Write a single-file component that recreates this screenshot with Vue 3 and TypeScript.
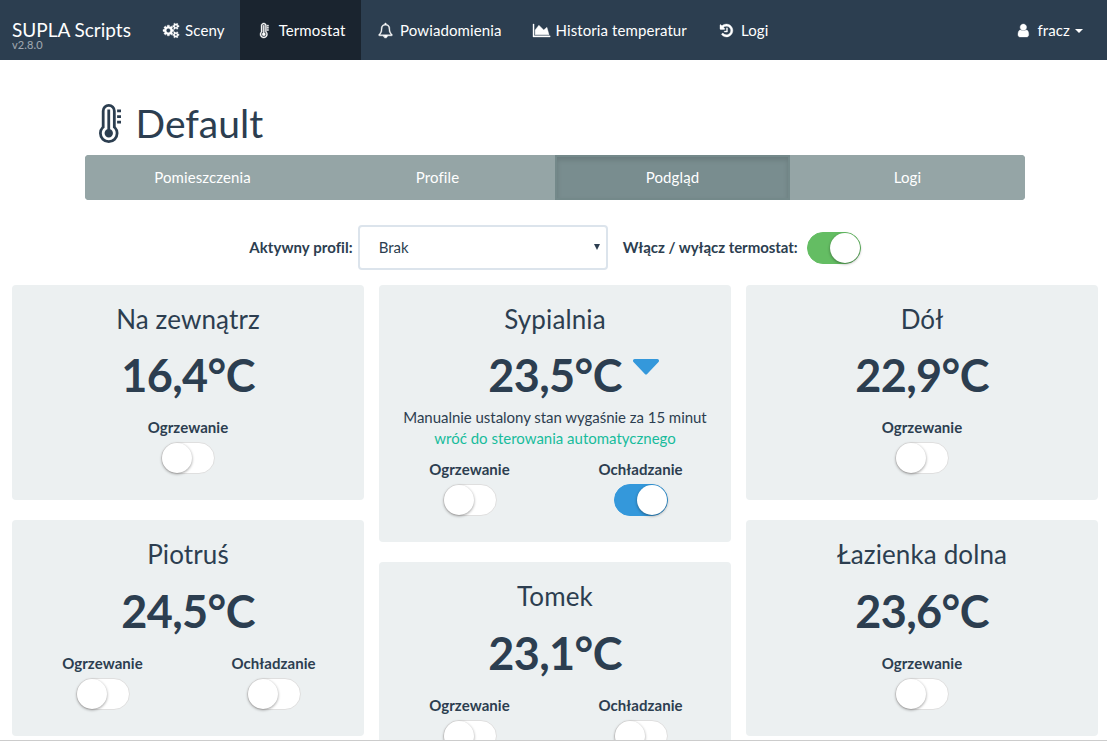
<script setup lang="ts">
interface Glyph {
  box: string
  width: number
  path: string
}

interface Switch {
  label: string
  on: boolean
}

interface Room {
  name: string
  temperature: string
  cooling?: boolean
  manual?: boolean
  switches: Switch[]
}

const thermometer: Glyph = {
  box: '0 0 1024 1792',
  width: 1024,
  path: 'M640 1344q0 80-56 136t-136 56-136-56-56-136q0-60 35-110t93-71v-907h128v907q58 21 93 71t35 110zm128 0q0-77-34-144t-94-112v-768q0-80-56-136t-136-56-136 56-56 136v768q-60 45-94 112t-34 144q0 133 93.5 226.5t226.5 93.5 226.5-93.5 93.5-226.5zm128 0q0 185-131.5 316.5t-316.5 131.5-316.5-131.5-131.5-316.5q0-182 128-313v-711q0-133 93.5-226.5t226.5-93.5 226.5 93.5 93.5 226.5v711q128 131 128 313zm128-576v128h-192v-128h192zm0-256v128h-192v-128h192zm0-256v128h-192v-128h192z',
}
const cogs: Glyph = {
  box: '-64 0 1920 1792',
  width: 1920,
  path: 'M832 896q0-106-75-181t-181-75-181 75-75 181 75 181 181 75 181-75 75-181zm768 512q0-52-38-90t-90-38-90 38-38 90q0 53 37.5 90.5t90.5 37.5 90.5-37.5 37.5-90.5zm0-1024q0-52-38-90t-90-38-90 38-38 90q0 53 37.5 90.5t90.5 37.5 90.5-37.5 37.5-90.5zm-384 421v185q0 10-7 19.5t-16 10.5l-155 24q-11 35-32 76 34 48 90 115 7 11 7 20 0 12-7 19-23 30-82.5 89.5t-78.5 59.5q-11 0-21-7l-115-90q-37 19-77 31-11 108-23 155-7 24-30 24h-186q-11 0-20-7.5t-10-17.5l-23-153q-34-10-75-31l-118 89q-7 7-20 7-11 0-21-8-144-133-144-160 0-9 7-19 10-14 41-53t47-61q-23-44-35-82l-152-24q-10-1-17-9.5t-7-19.5v-185q0-10 7-19.5t16-10.5l155-24q11-35 32-76-34-48-90-115-7-11-7-20 0-12 7-20 22-30 82-89t79-59q11 0 21 7l115 90q34-18 77-32 11-108 23-154 7-24 30-24h186q11 0 20 7.5t10 17.5l23 153q34 10 75 31l118-89q8-7 20-7 11 0 21 8 144 133 144 160 0 8-7 19-12 16-42 54t-45 60q23 48 34 82l152 23q10 2 17 10.5t7 19.5zm640 533v140q0 16-149 31-12 27-30 52 51 113 51 138 0 4-4 7-122 71-124 71-8 0-46-47t-52-68q-20 2-30 2t-30-2q-14 21-52 68t-46 47q-2 0-124-71-4-3-4-7 0-25 51-138-18-25-30-52-149-15-149-31v-140q0-16 149-31 13-29 30-52-51-113-51-138 0-4 4-7 4-2 35-20t59-34 30-16q8 0 46 46.5t52 67.5q20-2 30-2t30 2q51-71 92-112l6-2q4 0 124 70 4 3 4 7 0 25-51 138 17 23 30 52 149 15 149 31zm0-1024v140q0 16-149 31-12 27-30 52 51 113 51 138 0 4-4 7-122 71-124 71-8 0-46-47t-52-68q-20 2-30 2t-30-2q-14 21-52 68t-46 47q-2 0-124-71-4-3-4-7 0-25 51-138-18-25-30-52-149-15-149-31v-140q0-16 149-31 13-29 30-52-51-113-51-138 0-4 4-7 4-2 35-20t59-34 30-16q8 0 46 46.5t52 67.5q20-2 30-2t30 2q51-71 92-112l6-2q4 0 124 70 4 3 4 7 0 25-51 138 17 23 30 52 149 15 149 31z',
}
const bell: Glyph = {
  box: '0 0 1792 1792',
  width: 1792,
  path: 'M912 1696q0-16-16-16-59 0-101.5-42.5t-42.5-101.5q0-16-16-16t-16 16q0 73 51.5 124.5t124.5 51.5q16 0 16-16zm-666-288h1300q-266-300-266-832 0-51-24-105t-69-103-121.5-80.5-169.5-31.5-169.5 31.5-121.5 80.5-69 103-24 105q0 532-266 832zm1482 0q0 52-38 90t-90 38h-448q0 106-75 181t-181 75-181-75-75-181h-448q-52 0-90-38t-38-90q50-42 91-88t85-119.5 74.5-158.5 50-206 19.5-260q0-152 117-282.5t307-158.5q-8-19-8-39 0-40 28-68t68-28 68 28 28 68q0 20-8 39 190 28 307 158.5t117 282.5q0 139 19.5 260t50 206 74.5 158.5 85 119.5 91 88z',
}
const chart: Glyph = {
  box: '0 0 2048 1792',
  width: 2048,
  path: 'M2048 1536v128h-2048v-1536h128v1408h1920zm-384-1024l256 896h-1664v-576l448-576 576 576z',
}
const history: Glyph = {
  box: '128 0 1536 1792',
  width: 1536,
  path: 'M1664 896q0 156-61 298t-164 245-245 164-298 61q-172 0-327-72.5t-264-204.5q-7-10-6.5-22.5t8.5-20.5l137-138q10-9 25-9 16 2 23 12 73 95 179 147t225 52q104 0 198.5-40.5t163.5-109.5 109.5-163.5 40.5-198.5-40.5-198.5-109.5-163.5-163.5-109.5-198.5-40.5q-98 0-188 35.5t-160 101.5l137 138q31 30 14 69-17 40-59 40h-448q-26 0-45-19t-19-45v-448q0-42 40-59 39-17 69 14l130 129q107-101 244.5-156.5t284.5-55.5q156 0 298 61t245 164 164 245 61 298zm-640-288v448q0 14-9 23t-23 9h-320q-14 0-23-9t-9-23v-64q0-14 9-23t23-9h224v-352q0-14 9-23t23-9h64q14 0 23 9t9 23z',
}
const user: Glyph = {
  box: '256 0 1280 1792',
  width: 1280,
  path: 'M1536 1399q0 109-62.5 187t-150.5 78h-854q-88 0-150.5-78t-62.5-187q0-85 8.5-160.5t31.5-152 58.5-131 94-89 134.5-34.5q131 128 313 128t313-128q76 0 134.5 34.5t94 89 58.5 131 31.5 152 8.5 160.5zm-256-887q0 159-112.5 271.5t-271.5 112.5-271.5-112.5-112.5-271.5 112.5-271.5 271.5-112.5 271.5 112.5 112.5 271.5z',
}

const navItems = [
  { label: 'Sceny', icon: cogs, active: false },
  { label: 'Termostat', icon: thermometer, active: true },
  { label: 'Powiadomienia', icon: bell, active: false },
  { label: 'Historia temperatur', icon: chart, active: false },
  { label: 'Logi', icon: history, active: false },
]

const tabs = ['Pomieszczenia', 'Profile', 'Podgląd', 'Logi']
const activeTab = 'Podgląd'

const heating: Switch = { label: 'Ogrzewanie', on: false }
const coolingOff: Switch = { label: 'Ochładzanie', on: false }
const coolingOn: Switch = { label: 'Ochładzanie', on: true }

const columns: Room[][] = [
  [
    { name: 'Na zewnątrz', temperature: '16,4°C', switches: [heating] },
    { name: 'Piotruś', temperature: '24,5°C', switches: [heating, coolingOff] },
  ],
  [
    { name: 'Sypialnia', temperature: '23,5°C', cooling: true, manual: true, switches: [heating, coolingOn] },
    { name: 'Tomek', temperature: '23,1°C', switches: [heating, coolingOff] },
  ],
  [
    { name: 'Dół', temperature: '22,9°C', switches: [heating] },
    { name: 'Łazienka dolna', temperature: '23,6°C', switches: [heating] },
  ],
]
</script>

<template>
  <div class="page">
    <header class="navbar">
      <div class="brand">
        <span class="brand-name">SUPLA Scripts</span>
        <span class="version">v2.8.0</span>
      </div>
      <nav class="menu">
        <a v-for="item in navItems" :key="item.label" class="menu-item" :class="{ active: item.active }">
          <span class="icon-slot">
            <svg class="icon" :viewBox="item.icon.box" :style="{ width: (item.icon.width / 1792) * 15 + 'px' }">
              <path :d="item.icon.path" />
            </svg>
          </span>
          <span>{{ item.label }}</span>
        </a>
      </nav>
      <a class="menu-item account">
        <span class="icon-slot">
          <svg class="icon" :viewBox="user.box" :style="{ width: (user.width / 1792) * 15 + 'px' }">
            <path :d="user.path" />
          </svg>
        </span>
        <span>fracz</span>
        <span class="caret"></span>
      </a>
    </header>

    <section class="container">
      <h1 class="heading">
        <span class="heading-slot">
          <svg class="heading-icon" :viewBox="thermometer.box"><path :d="thermometer.path" /></svg>
        </span>
        <span>Default</span>
      </h1>
      <div class="tabs">
        <a v-for="tab in tabs" :key="tab" class="tab" :class="{ active: tab === activeTab }">{{ tab }}</a>
      </div>
      <div class="controls">
        <span class="control-label">Aktywny profil:</span>
        <div class="select">
          <span>Brak</span>
          <svg class="select-arrow" viewBox="0 0 6 6"><path d="M0 0h6L3 6z" /></svg>
        </div>
        <span class="control-label power">Włącz / wyłącz termostat:</span>
        <span class="toggle on green"><span class="knob"></span></span>
      </div>
    </section>

    <main class="board">
      <div v-for="(rooms, index) in columns" :key="index" class="column">
        <article v-for="room in rooms" :key="room.name" class="card">
          <h2 class="room">{{ room.name }}</h2>
          <div class="reading">
            <span class="temperature">{{ room.temperature }}</span>
            <svg v-if="room.cooling" class="trend" viewBox="384 640 1024 576" preserveAspectRatio="none">
              <path
                d="M1408 704q0 26-19 45l-448 448q-19 19-45 19t-45-19l-448-448q-19-19-19-45t19-45 45-19h896q26 0 45 19t19 45z"
              />
            </svg>
          </div>
          <div v-if="room.manual" class="manual">
            <div class="note">Manualnie ustalony stan wygaśnie za 15 minut</div>
            <a class="link">wróć do sterowania automatycznego</a>
          </div>
          <div class="switches">
            <div v-for="item in room.switches" :key="item.label" class="switch">
              <span class="switch-label">{{ item.label }}</span>
              <span class="toggle" :class="{ on: item.on }"><span class="knob"></span></span>
            </div>
          </div>
        </article>
      </div>
    </main>
  </div>
</template>

<style>
body {
  margin: 0;
  overflow: hidden;
}
</style>

<style scoped>
* {
  box-sizing: border-box;
}
.page {
  height: 741px;
  overflow: hidden;
  background: #fff;
  border-bottom: 1px solid #ccc;
  color: #2c3e50;
  font: 400 15px/21px Lato, "Liberation Sans", sans-serif;
}
.navbar {
  display: flex;
  height: 60px;
  background: #2c3e50;
  color: #fff;
}
.brand {
  display: flex;
  flex-direction: column;
  width: 146px;
  padding: 20px 0 0 12px;
  white-space: nowrap;
}
.brand-name {
  font-size: 19px;
  line-height: 20px;
}
.version {
  margin-top: -1px;
  font-size: 11px;
  line-height: 12px;
  letter-spacing: 0.1px;
  opacity: 0.55;
}
.menu {
  display: flex;
}
.menu-item {
  display: flex;
  align-items: center;
  height: 60px;
  padding: 0 15px;
  letter-spacing: 0.1px;
  white-space: nowrap;
}
.menu-item.active {
  padding-right: 15.6px;
  background: #1a242f;
}
.icon-slot {
  display: flex;
  justify-content: center;
  width: 19.3px;
  margin-right: 4.8px;
}
.icon {
  flex: none;
  height: 15px;
  overflow: visible;
  fill: currentColor;
  stroke: currentColor;
  stroke-width: 45;
}
.account {
  margin-left: auto;
  padding-right: 24px;
}
.caret {
  margin: 2px 0 0 5px;
  border: 4px solid transparent;
  border-top-color: #fff;
  border-bottom: 0;
}
.container {
  width: 940px;
  margin-left: 85px;
}
.heading {
  display: flex;
  align-items: center;
  height: 43px;
  margin: 42px 0 10px;
  font-size: 39px;
  font-weight: 400;
  line-height: 43px;
}
.heading-slot {
  display: flex;
  justify-content: center;
  width: 50px;
  margin-right: 0.5px;
}
.heading-icon {
  width: 22.3px;
  height: 39px;
  fill: currentColor;
}
.tabs {
  display: grid;
  grid-template-columns: repeat(4, 1fr);
  height: 45px;
  overflow: hidden;
  border-radius: 4px;
}
.tab {
  display: flex;
  align-items: center;
  justify-content: center;
  border: 2px solid #95a5a6;
  background: #95a5a6;
  color: #fff;
  letter-spacing: 0.1px;
}
.tab.active {
  border-color: #74898a;
  background: #798d8f;
  box-shadow: inset 0 3px 5px rgba(0, 0, 0, 0.125);
}
.controls {
  display: flex;
  align-items: center;
  justify-content: center;
  height: 45px;
  margin-top: 25px;
}
.control-label {
  font-weight: 700;
  letter-spacing: 0.06px;
  white-space: nowrap;
}
.select {
  display: flex;
  align-items: center;
  justify-content: space-between;
  width: 250px;
  height: 45px;
  margin-left: 5px;
  padding: 0 6px 0 19px;
  border: 2px solid #dce4ec;
  border-radius: 4px;
}
.select-arrow {
  width: 6px;
  height: 6px;
  margin-top: -2px;
  fill: #2c3e50;
}
.control-label.power {
  margin: 0 9px 0 15px;
  letter-spacing: -0.04px;
}
.toggle {
  display: block;
  flex: none;
  width: 54px;
  height: 32px;
  border: 1px solid #dfdfdf;
  border-radius: 20px;
  background: #fff;
}
.toggle.on {
  border-color: #3498db;
  background: #3498db;
}
.toggle.green {
  border-color: #64bd63;
  background: #64bd63;
}
.knob {
  display: block;
  width: 30px;
  height: 30px;
  border-radius: 50%;
  background: #fff;
  box-shadow: 0 1px 3px rgba(0, 0, 0, 0.4);
}
.toggle.on .knob {
  margin-left: 22px;
}
.board {
  display: grid;
  grid-template-columns: repeat(3, 352px);
  gap: 15px;
  align-items: start;
  margin: 15px 0 0 12px;
}
.column {
  display: flex;
  flex-direction: column;
  gap: 20px;
}
.card {
  padding: 20px 5px 26px;
  border-radius: 4px;
  background: #ecf0f1;
  text-align: center;
}
.room {
  height: 29px;
  margin: 0;
  font-size: 26px;
  font-weight: 400;
  line-height: 29px;
  letter-spacing: 0.12px;
}
.reading {
  display: grid;
  grid-template-columns: 1fr auto 1fr;
  height: 51px;
  margin-top: 16.4px;
}
.temperature {
  grid-column: 2;
  font-size: 45px;
  font-weight: 700;
  line-height: 50px;
  letter-spacing: -0.6px;
}
.trend {
  width: 26px;
  height: 15.5px;
  margin: 9px 0 0 11.5px;
  fill: #3498db;
}
.manual {
  margin: 6px 0 -6px;
}
.note {
  letter-spacing: -0.04px;
}
.link {
  display: block;
  color: #18bc9c;
}
.switches {
  display: flex;
  margin-top: 16px;
}
.switch {
  display: flex;
  flex: 1;
  flex-direction: column;
  align-items: center;
  gap: 4px;
}
.switch-label {
  font-weight: 700;
  letter-spacing: 0.06px;
}
</style>
